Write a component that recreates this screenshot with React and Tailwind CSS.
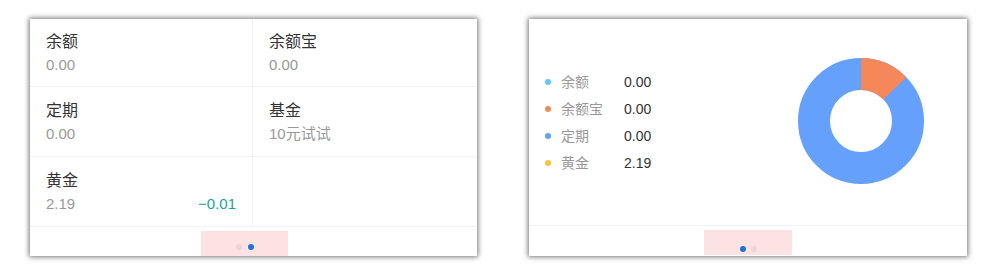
import React from "react";

const font = { fontFamily: '"Liberation Sans", "Noto Sans CJK SC", sans-serif' };

function Cell({ label, value, extra, border }) {
  return (
    <div className={`${border ? "w-[223px] border-r border-[#f2f2f2]" : "flex-1"} flex flex-col justify-center pl-4 pr-4`}>
      <div className="text-[16px] leading-[24px] text-[#333]">{label}</div>
      {value !== undefined && (
        <div className="flex justify-between text-[15px] leading-[22px]">
          <span className="text-[#999]">{value}</span>
          {extra && <span className="text-[#1ea392]">{extra}</span>}
        </div>
      )}
    </div>
  );
}

export default function App() {
  const legend = [
    { c: "bg-[#5ec9f5]", l: "余额", v: "0.00" },
    { c: "bg-[#f5885b]", l: "余额宝", v: "0.00" },
    { c: "bg-[#65a0fd]", l: "定期", v: "0.00" },
    { c: "bg-[#f8c63b]", l: "黄金", v: "2.19" },
  ];
  return (
    <div className="w-[1002px] h-[276px] bg-white flex pt-[19px] pl-[30px] gap-[52px]" style={font}>
      <div className="w-[447px] h-[237px] bg-white flex flex-col shadow-[0_0_5px_1px_rgba(0,0,0,0.55)]">
        <div className="h-[68px] flex border-b border-[#f2f2f2]">
          <Cell label="余额" value="0.00" border />
          <Cell label="余额宝" value="0.00" />
        </div>
        <div className="h-[70px] flex border-b border-[#f2f2f2]">
          <Cell label="定期" value="0.00" border />
          <Cell label="基金" value="10元试试" />
        </div>
        <div className="h-[70px] flex border-b border-[#f2f2f2]">
          <Cell label="黄金" value="2.19" extra="−0.01" border />
          <div className="flex-1" />
        </div>
        <div className="flex-1 pt-[4px] pl-[171px]">
          <div className="w-[87px] h-[25px] bg-[#fde2e3] flex justify-center items-start pt-[13px] gap-[6px]">
            <span className="w-[6px] h-[6px] rounded-full bg-[#eed3d8]" />
            <span className="w-[6px] h-[6px] rounded-full bg-[#1f72d8]" />
          </div>
        </div>
      </div>

      <div className="w-[438px] h-[237px] bg-white flex flex-col shadow-[0_0_5px_1px_rgba(0,0,0,0.55)]">
        <div className="h-[207px] flex items-center border-b border-[#f2f2f2] pl-[16px] pr-[43px]">
          <div className="flex flex-col pt-[1px]">
            {legend.map((r) => (
              <div key={r.l} className="h-[27px] flex items-center text-[14px]">
                <span className={`w-[6px] h-[6px] rounded-full ${r.c}`} />
                <span className="w-[63px] ml-[10px] text-[#999]">{r.l}</span>
                <span className="text-[#333]">{r.v}</span>
              </div>
            ))}
          </div>
          <svg width="126" height="126" viewBox="0 0 126 126" className="ml-auto mb-[3px]">
            <circle cx="63" cy="63" r="47" fill="none" stroke="#65a0fd" strokeWidth="32" />
            <path d="M63 0 A63 63 0 0 1 108.3 19.2 L85.3 41.5 A31 31 0 0 0 63 32 Z" fill="#f5885b" />
          </svg>
        </div>
        <div className="flex-1 pt-[4px] flex justify-center">
          <div className="w-[88px] h-[25px] bg-[#fde2e3] flex justify-center items-start pt-[16px] gap-[5px]">
            <span className="w-[6px] h-[6px] rounded-full bg-[#1f72d8]" />
            <span className="w-[6px] h-[6px] rounded-full bg-[#eed3d8]" />
          </div>
        </div>
      </div>
    </div>
  );
}
